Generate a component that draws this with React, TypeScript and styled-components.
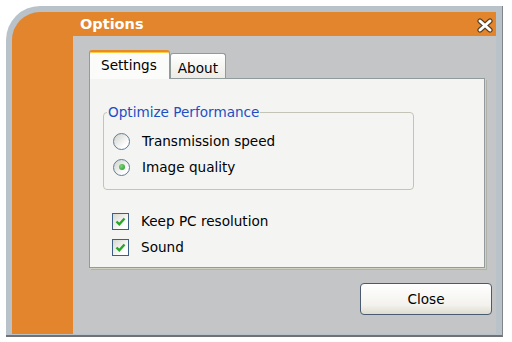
import React from 'react';
import styled, { createGlobalStyle } from 'styled-components';

const Global = createGlobalStyle`
  html, body { margin: 0; padding: 0; background: #fff; }
  body {
    font-family: "DejaVu Sans", Verdana, sans-serif;
    font-size: 13.6px;
    color: #000;
  }
`;

const Frame = styled.div`
  box-sizing: border-box;
  margin: 6px 0 0 6px;
  width: 497px;
  height: 331px;
  padding: 6px 6px 1px 6px;
  background: #b9c1c9;
  border-right: 1px solid #80858a;
  border-bottom: 2px solid #6f7377;
  border-top-left-radius: 34px;
  display: flex;
`;

const Shell = styled.div`
  flex: 1;
  display: grid;
  grid-template-columns: 61px 1fr;
  grid-template-rows: 24px 1fr;
  background: #e2852d;
  border-top-left-radius: 28px;
`;

const TitleBar = styled.div`
  grid-column: 1 / -1;
  display: flex;
  align-items: center;
  justify-content: space-between;
  padding: 0 3px 0 68px;
`;

const Title = styled.span`
  font-weight: bold;
  font-size: 14.5px;
  color: #fff;
  padding-bottom: 1px;
`;

const CloseX = styled.svg`
  display: block;
  margin-top: 2px;
`;

const Content = styled.div`
  grid-column: 2;
  background: #c4c5c7;
  display: flex;
  flex-direction: column;
  align-items: flex-start;
  padding: 14px 4px 0 16px;
`;

const TabRow = styled.div`
  display: flex;
  align-items: flex-end;
  height: 28px;
  position: relative;
  z-index: 1;
`;

const Tab = styled.div<{ $active?: boolean }>`
  box-sizing: border-box;
  display: flex;
  align-items: center;
  height: ${p => (p.$active ? 29 : 25)}px;
  margin-bottom: ${p => (p.$active ? -1 : 0)}px;
  padding: ${p => (p.$active ? '0 12px 2px 11px' : '3px 7px 0 7px')};
  border: 1px solid #919b9c;
  border-bottom: none;
  border-top: ${p => (p.$active ? '2px solid #e68b2c' : '1px solid #919b9c')};
  box-shadow: ${p => (p.$active ? 'inset 0 1px 0 #ffc83c' : 'none')};
  border-radius: 3px 3px 0 0;
  background: ${p => (p.$active ? '#fbfbfa' : 'linear-gradient(#ffffff, #ecebe6)')};
`;

const Panel = styled.div`
  box-sizing: border-box;
  width: 396px;
  height: 190px;
  border: 1px solid #919b9c;
  background: #f4f4f3;
  box-shadow: 1px 1px 0 #d0d0c4, 2px 2px 0 #aeb2a8;
  padding: 25px 0 0 13px;
  display: flex;
  flex-direction: column;
  align-items: flex-start;
`;

const Group = styled.fieldset`
  box-sizing: border-box;
  margin: 0;
  width: 311px;
  border: 1px solid #c4c4b6;
  border-radius: 4px;
  padding: 0 0 9px 3px;
`;

const Legend = styled.legend`
  color: #1d4fc4;
  padding: 0 1px;
  line-height: 16px;
`;

const Rows = styled.div<{ $inset: number; $top: number }>`
  display: flex;
  flex-direction: column;
  padding-left: ${p => p.$inset}px;
  padding-top: ${p => p.$top}px;
`;

const Row = styled.label`
  display: flex;
  align-items: center;
  gap: 12px;
  height: 26px;
`;

const RadioMark = styled.span<{ $checked?: boolean }>`
  box-sizing: border-box;
  width: 17px;
  height: 17px;
  border-radius: 50%;
  border: 1.5px solid #5d7d9b;
  background: linear-gradient(135deg, #d0d2cc, #ffffff 75%);
  display: flex;
  align-items: center;
  justify-content: center;
  &::after {
    content: '';
    display: ${p => (p.$checked ? 'block' : 'none')};
    width: 6px;
    height: 6px;
    border-radius: 50%;
    background: radial-gradient(circle at 35% 35%, #7fd37f, #1f9a1f);
  }
`;

const CheckMark = styled.span`
  box-sizing: border-box;
  width: 17px;
  height: 17px;
  border: 1.5px solid #3e5f84;
  background: linear-gradient(135deg, #d8d8d0, #ffffff 75%);
  display: flex;
  align-items: center;
  justify-content: center;
`;

const ButtonRow = styled.div`
  align-self: stretch;
  display: flex;
  justify-content: flex-end;
  margin-top: 15px;
`;

const Button = styled.button`
  box-sizing: border-box;
  width: 132px;
  height: 32px;
  border: 1px solid #4a5a70;
  border-radius: 4px;
  background: linear-gradient(#ffffff, #f3f2ee 70%, #dedbd0);
  font-family: inherit;
  font-size: 13.6px;
  color: #000;
  padding: 0;
`;

const Check = () => (
  <CheckMark>
    <svg width="11" height="11" viewBox="0 0 11 11">
      <path d="M1.5 5.5 L4.3 8.3 L9.5 2.5" fill="none" stroke="#2aa52a" strokeWidth="2.4" />
    </svg>
  </CheckMark>
);

export default function App() {
  return (
    <>
      <Global />
      <Frame>
        <Shell>
          <TitleBar>
            <Title>Options</Title>
            <CloseX width="16" height="15" viewBox="0 0 16 15">
              <path d="M3 3 L13 12 M13 3 L3 12" stroke="#5a3e22" strokeWidth="5.2" strokeLinecap="round" />
              <path d="M3 3 L13 12 M13 3 L3 12" stroke="#ffffff" strokeWidth="3" strokeLinecap="round" />
            </CloseX>
          </TitleBar>
          <div />
          <Content>
            <TabRow>
              <Tab $active>Settings</Tab>
              <Tab>About</Tab>
            </TabRow>
            <Panel>
              <Group>
                <Legend>Optimize Performance</Legend>
                <Rows $inset={6} $top={8}>
                  <Row>
                    <RadioMark />
                    Transmission speed
                  </Row>
                  <Row>
                    <RadioMark $checked />
                    Image quality
                  </Row>
                </Rows>
              </Group>
              <Rows $inset={9} $top={18}>
                <Row>
                  <Check />
                  Keep PC resolution
                </Row>
                <Row>
                  <Check />
                  Sound
                </Row>
              </Rows>
            </Panel>
            <ButtonRow>
              <Button>Close</Button>
            </ButtonRow>
          </Content>
        </Shell>
      </Frame>
    </>
  );
}
